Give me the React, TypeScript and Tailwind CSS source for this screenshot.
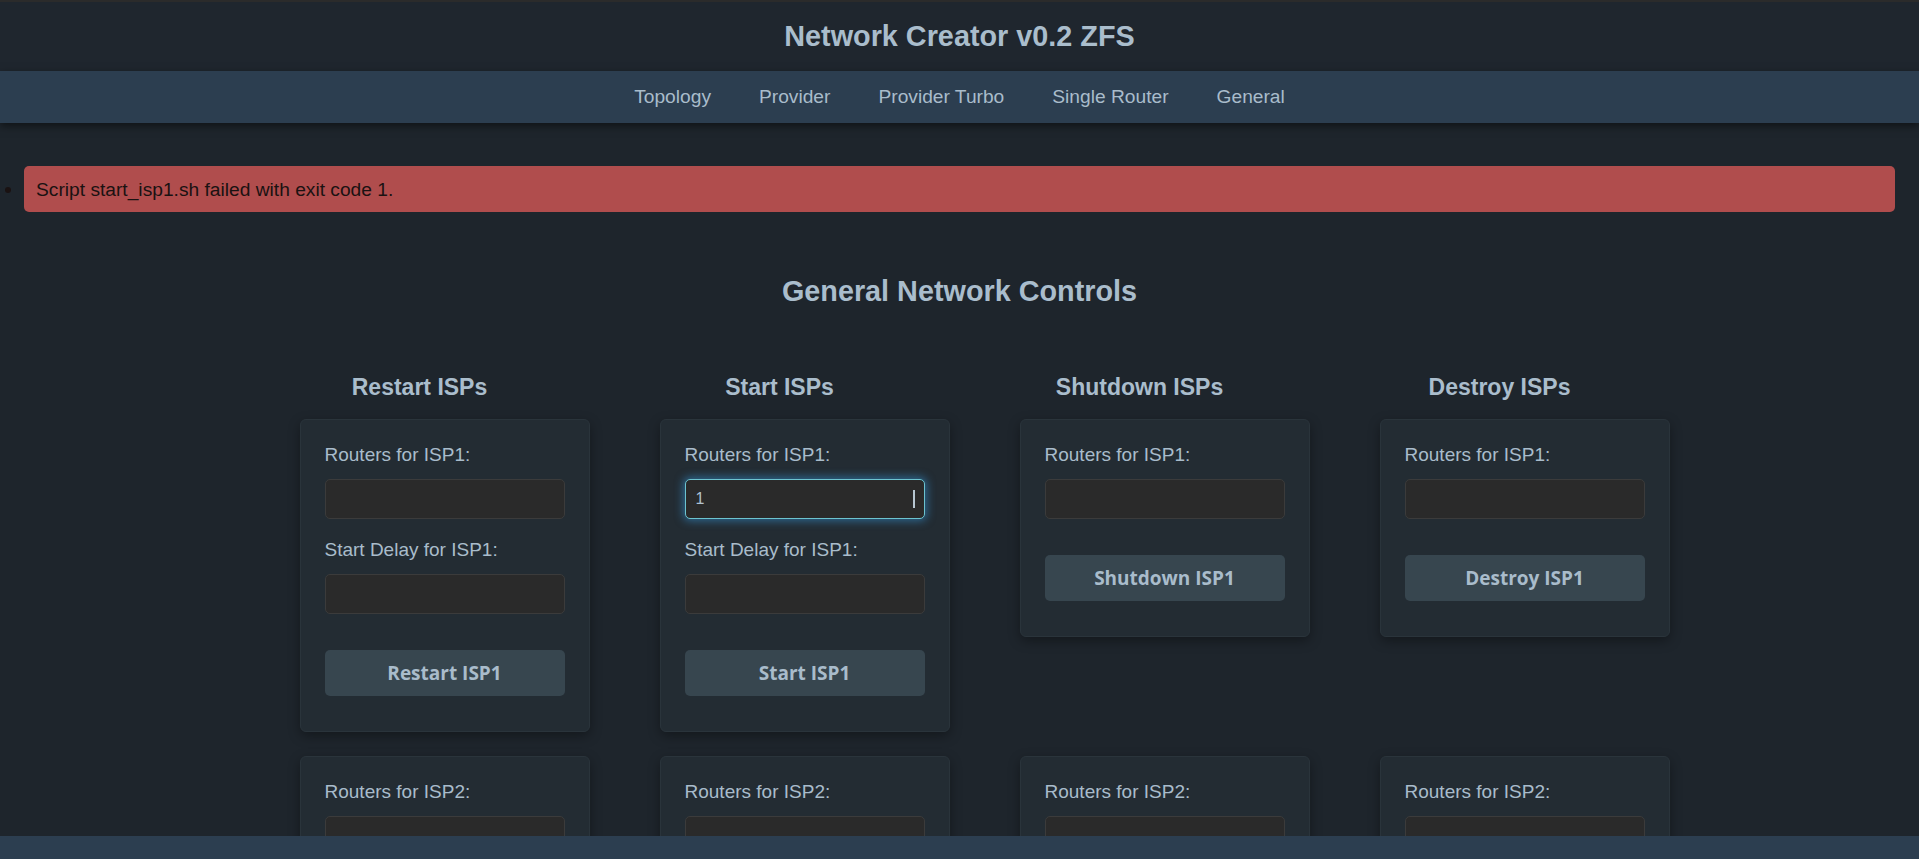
import React from "react";

const sans = { fontFamily: '"Liberation Sans", Arial, sans-serif' };
const btnFont = { fontFamily: '"Open Sans", "Noto Sans", sans-serif' };

interface Column {
  title: string;
  action: string;
  withDelay: boolean;
}

const columns: Column[] = [
  { title: "Restart ISPs", action: "Restart", withDelay: true },
  { title: "Start ISPs", action: "Start", withDelay: true },
  { title: "Shutdown ISPs", action: "Shutdown", withDelay: false },
  { title: "Destroy ISPs", action: "Destroy", withDelay: false },
];

const isps = [1, 2, 3];

function Field({ label, value, focused }: { label: string; value?: string; focused?: boolean }) {
  return (
    <div className="flex flex-col">
      <label className="text-[19px] leading-[22px] text-[#a9bccb] mb-[13px]">{label}</label>
      <div className="relative">
        <input
          readOnly
          value={value ?? ""}
          className={
            focused
              ? "w-full h-[40px] rounded-[5px] bg-[#2a2a2a] border border-[#6cc3cf] px-[10px] text-[16px] text-[#b0c2d0] outline-none shadow-[0_0_8px_2px_rgba(52,152,219,0.55)]"
              : "w-full h-[40px] rounded-[5px] bg-[#2a2a2a] border border-[#3b3b3b] px-[10px] text-[16px] text-[#b0c2d0] outline-none"
          }
          style={sans}
        />
        {focused && <span className="absolute right-[10px] top-[11px] w-[2px] h-[18px] bg-[#b7c6d1]" />}
      </div>
    </div>
  );
}

function Card({ col, isp }: { col: Column; isp: number }) {
  const focused = col.action === "Start" && isp === 1;
  return (
    <div className="ml-[60px] w-[290px] rounded-[6px] border border-[#2a343b] bg-[#232c33] px-[24px] pt-[24px] pb-[35px] shadow-[0_4px_12px_rgba(0,0,0,0.35)]">
      <Field label={`Routers for ISP${isp}:`} value={focused ? "1" : ""} focused={focused} />
      {col.withDelay && (
        <div className="mt-[20px]">
          <Field label={`Start Delay for ISP${isp}:`} />
        </div>
      )}
      <button
        type="button"
        className="mt-[36px] w-full h-[46px] rounded-[5px] bg-[#37464f] text-[19px] font-bold text-[#a9bccb]"
        style={btnFont}
      >
        {col.action} ISP{isp}
      </button>
    </div>
  );
}

export default function App() {
  return (
    <div className="min-h-screen bg-[#1e252c] text-[#b0c4d4] pb-[60px]" style={sans}>
      <header className="h-[71px] bg-[#1f262e] border-t-[2px] border-[#2b2b2b] flex items-center justify-center">
        <h1 className="text-[28.8px] font-bold text-[#aabdcc]">Network Creator v0.2 ZFS</h1>
      </header>
      <nav className="h-[52px] bg-[#2c3e50] flex items-center justify-center gap-[48px] shadow-[0_3px_8px_rgba(0,0,0,0.5)]">
        {["Topology", "Provider", "Provider Turbo", "Single Router", "General"].map((item) => (
          <a key={item} className="text-[19.2px] text-[#a9bccb]">
            {item}
          </a>
        ))}
      </nav>

      <ul className="list-disc pl-[24px] pr-[24px] mt-[43px] text-[19.2px] text-black">
        <li className="rounded-[5px] bg-[#b04d4d] h-[46px] px-[12px] text-[19.2px] text-[#1a1212] leading-[45px] marker:text-[21px]">
          Script start_isp1.sh failed with exit code 1.
        </li>
      </ul>

      <h2 className="mt-[58px] text-center text-[28.8px] font-bold text-[#aabdcc]">General Network Controls</h2>

      <div className="w-[1440px] mx-auto mt-[60px] grid grid-cols-4 gap-y-[24px] items-start">
        {columns.map((col) => (
          <h3 key={col.title} className="text-center text-[23px] leading-[28px] font-bold text-[#aabdcc] mb-[-6px]">
            {col.title}
          </h3>
        ))}
        {isps.map((isp) => columns.map((col) => <Card key={`${col.action}-${isp}`} col={col} isp={isp} />))}
      </div>

      <footer className="fixed bottom-0 left-0 right-0 h-[23px] bg-[#2c3e50]" />
    </div>
  );
}
